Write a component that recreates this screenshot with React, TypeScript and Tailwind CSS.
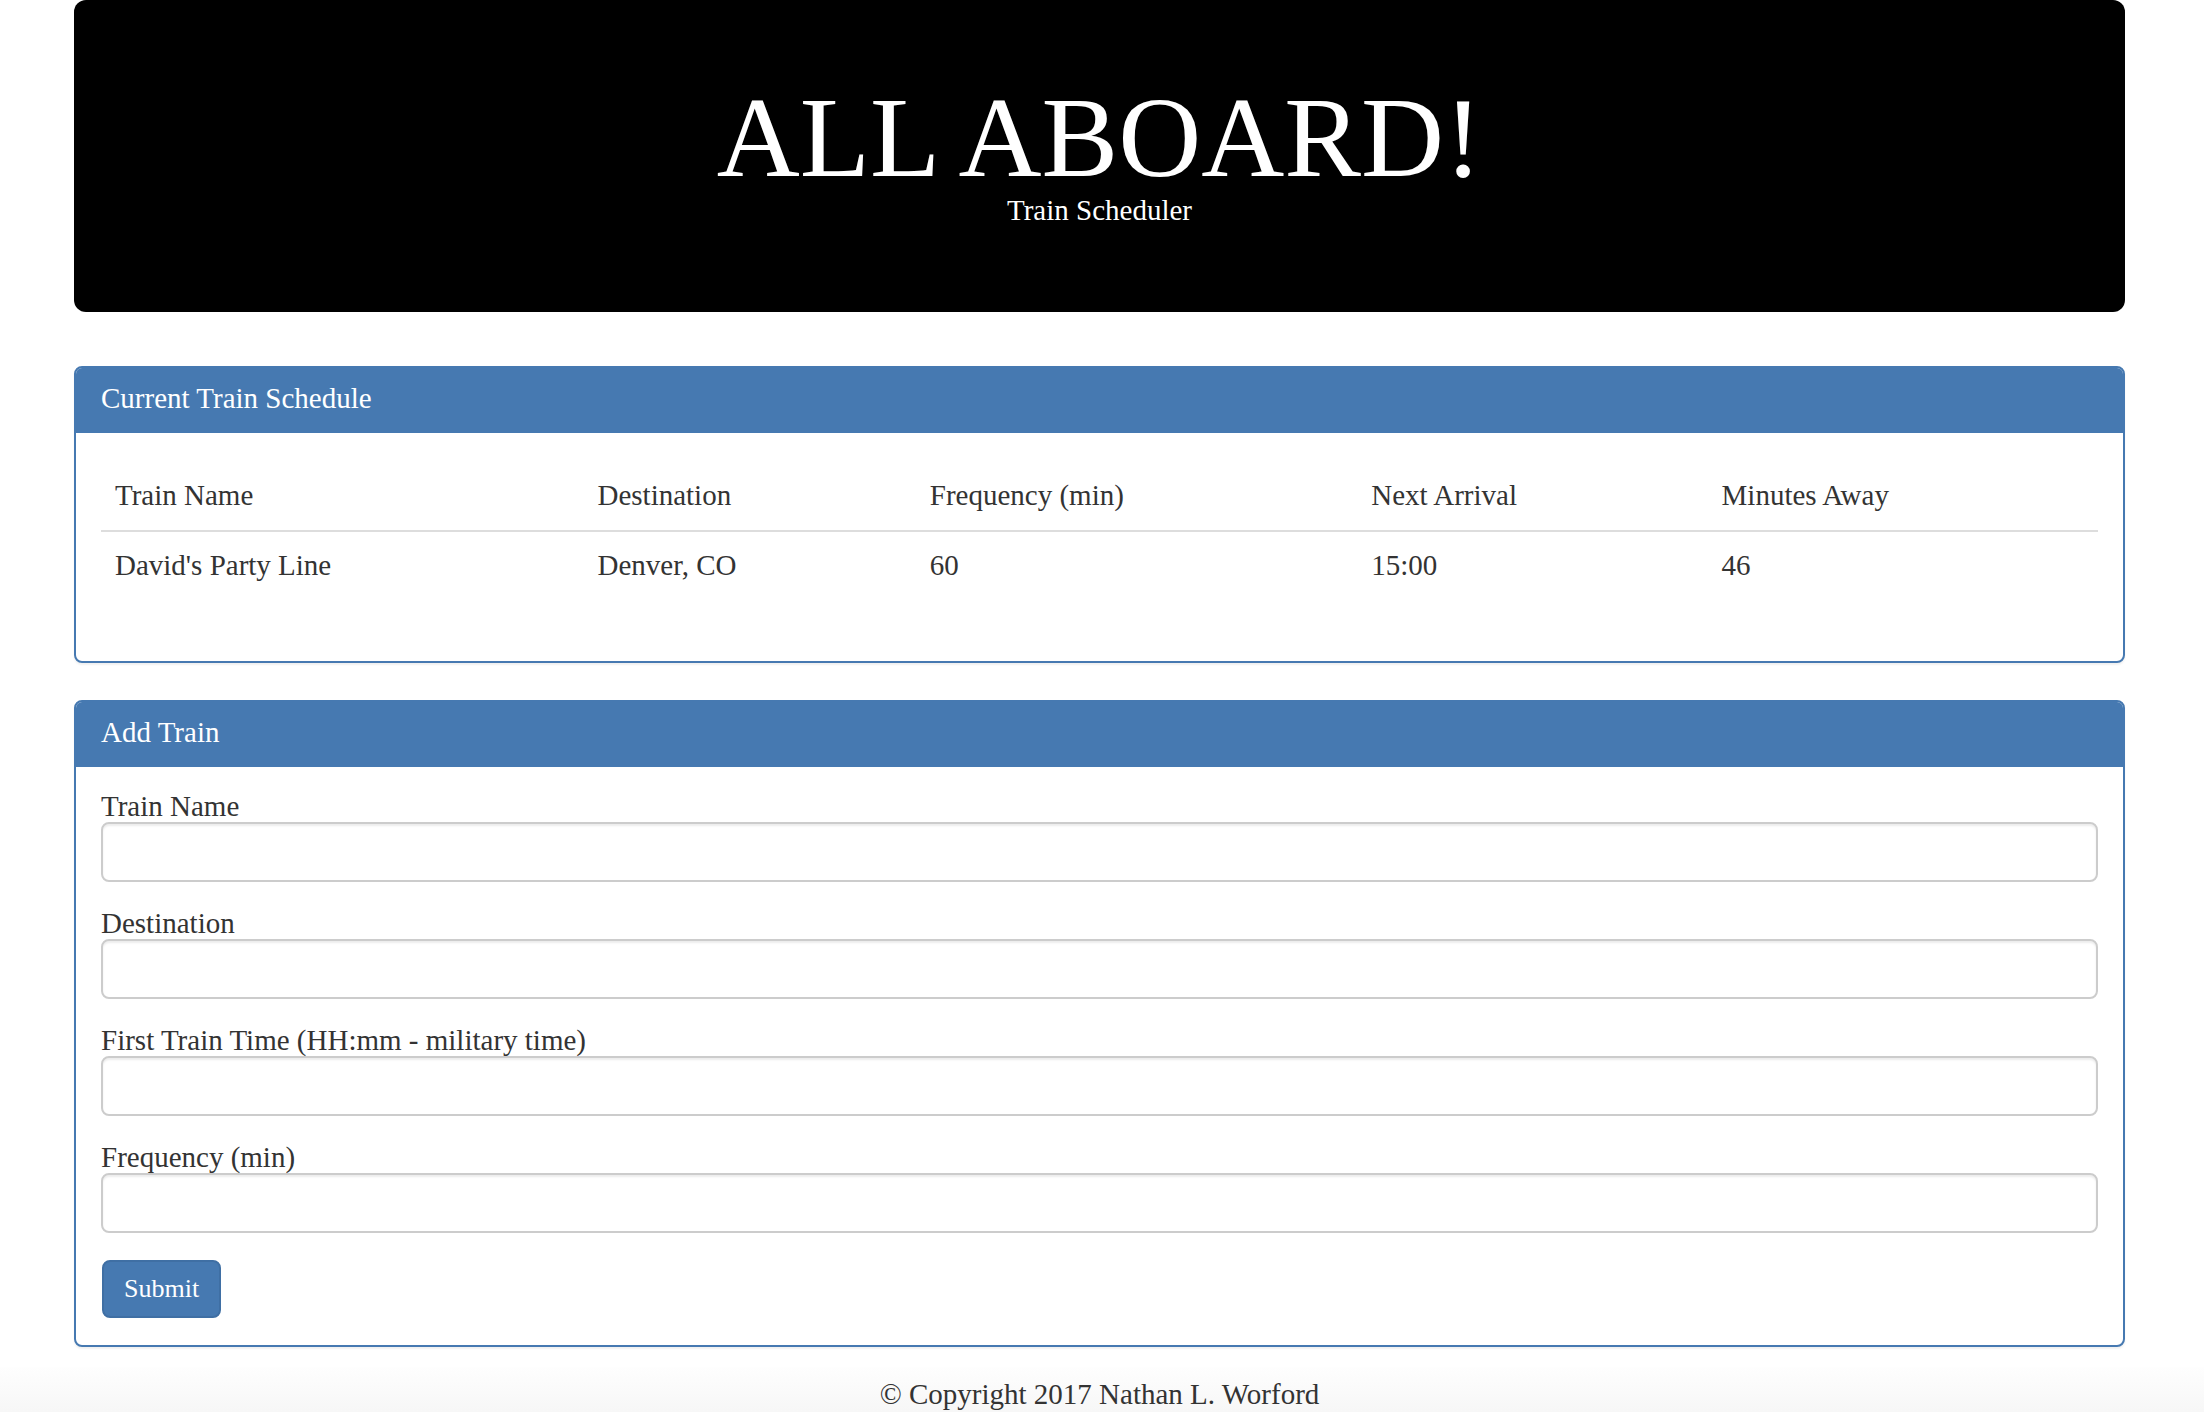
import React from 'react';

const trains = [
  { name: "David's Party Line", destination: 'Denver, CO', frequency: '60', next: '15:00', away: '46' },
];

const columns = [
  { label: 'Train Name', width: 'w-[482px]' },
  { label: 'Destination', width: 'w-[332px]' },
  { label: 'Frequency (min)', width: 'w-[441px]' },
  { label: 'Next Arrival', width: 'w-[350px]' },
  { label: 'Minutes Away', width: 'w-[390px]' },
];

const fields = ['Train Name', 'Destination', 'First Train Time (HH:mm - military time)', 'Frequency (min)'];

function Panel({ title, children }: { title: string; children: React.ReactNode }) {
  return (
    <div className="border-2 border-[#4679b1] rounded-[8px] overflow-hidden bg-white shadow-[0_2px_2px_rgba(0,0,0,0.06)]">
      <div className="bg-[#4679b1] h-[65px] pt-[14px] px-[25px]">
        <h3 className="text-white text-[29px] leading-[32px]">{title}</h3>
      </div>
      {children}
    </div>
  );
}

export default function App() {
  return (
    <div className="min-h-screen bg-white text-[#333] font-['Liberation_Serif',_'Times_New_Roman',_serif]">
      <div className="ml-[74px] mr-[79px]">
        <div className="bg-black rounded-[12px] pt-[82px] pb-[86px] flex flex-col items-center text-white">
          <h1 className="text-[115px] leading-[112px]">ALL ABOARD!</h1>
          <p className="text-[29px] leading-[32px]">Train Scheduler</p>
        </div>

        <div className="mt-[54px]">
          <Panel title="Current Train Schedule">
            <div className="px-[25px] pt-[27px] pb-[62px]">
              <table className="w-full border-collapse text-[29px] leading-[40px]">
                <thead>
                  <tr className="border-b-2 border-[#dddddd]">
                    {columns.map((c) => (
                      <th key={c.label} className={`${c.width} text-left font-normal px-[14px] py-[15px]`}>
                        {c.label}
                      </th>
                    ))}
                  </tr>
                </thead>
                <tbody>
                  {trains.map((t) => (
                    <tr key={t.name}>
                      <td className="px-[14px] pt-[13px] pb-[14px]">{t.name}</td>
                      <td className="px-[14px] pt-[13px] pb-[14px]">{t.destination}</td>
                      <td className="px-[14px] pt-[13px] pb-[14px]">{t.frequency}</td>
                      <td className="px-[14px] pt-[13px] pb-[14px]">{t.next}</td>
                      <td className="px-[14px] pt-[13px] pb-[14px]">{t.away}</td>
                    </tr>
                  ))}
                </tbody>
              </table>
            </div>
          </Panel>
        </div>

        <div className="mt-[37px]">
          <Panel title="Add Train">
            <form className="px-[25px] pt-[23px] pb-[27px]" onSubmit={(e) => e.preventDefault()}>
              {fields.map((f) => (
                <div key={f} className="mb-[25px]">
                  <label className="block text-[29px] leading-[32px]">{f}</label>
                  <input
                    type="text"
                    className="block w-full h-[60px] border-2 border-[#cccccc] rounded-[8px] px-[20px] text-[28px] shadow-[inset_0_2px_2px_rgba(0,0,0,0.075)] outline-none"
                  />
                </div>
              ))}
              <button
                type="submit"
                className="mt-[2px] ml-[1px] h-[58px] px-[20px] bg-[#4679b1] border-2 border-[#3f6fa4] rounded-[8px] text-white text-[26px] leading-[32px]"
              >
                Submit
              </button>
            </form>
          </Panel>
        </div>
      </div>

      <footer className="mt-[20px] pt-[7px] pb-[10px] text-center text-[29px] leading-[40px] bg-gradient-to-b from-[#fefefe] to-[#f5f5f5]">
        <div className="ml-[74px] mr-[79px]">© Copyright 2017 Nathan L. Worford</div>
      </footer>
    </div>
  );
}
